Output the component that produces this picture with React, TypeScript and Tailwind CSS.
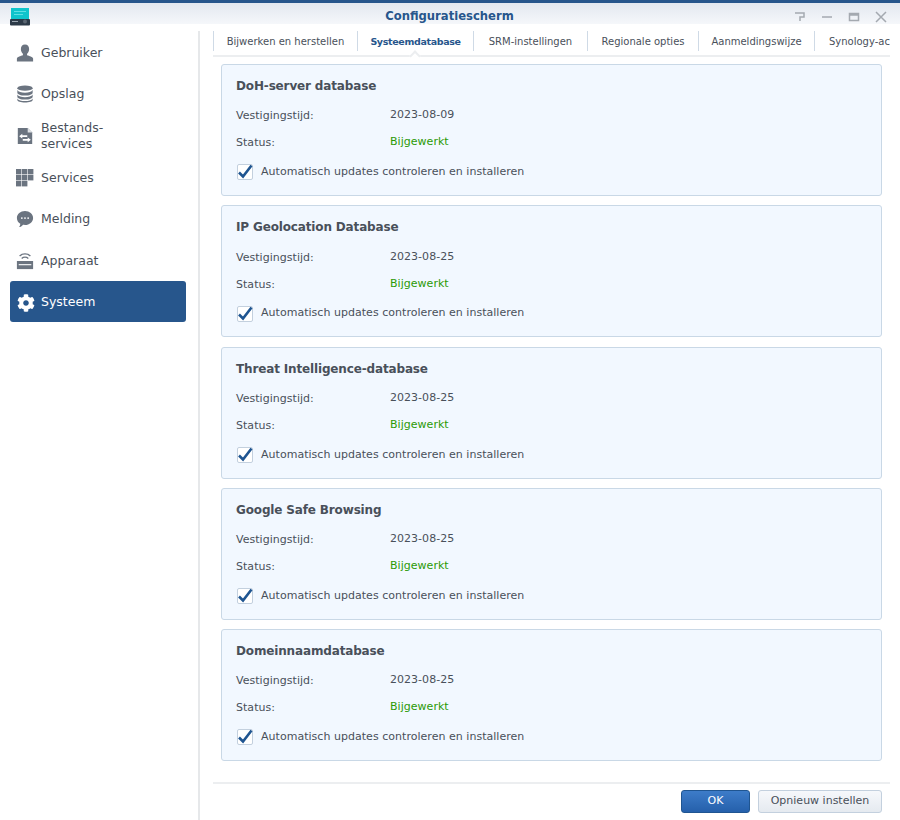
import { FaCog } from "react-icons/fa";

const font = "font-['DejaVu_Sans',Verdana,sans-serif]";

const UserIcon = () => (
  <svg viewBox="0 0 20 20" className="h-5 w-5" fill="#6b7480">
    <path d="M10 0.500c3 0 4.600 2.200 4.600 5 0 2.200-1 4.400-2.300 5.400v1.600c2.600.9 6.300 1.700 6.700 3.600v3.400H1v-3.400c.4-1.900 4.100-2.700 6.700-3.600v-1.600C6.400 9.900 5.400 7.700 5.400 5.500c0-2.800 1.600-5 4.600-5z" />
  </svg>
);

const DbIcon = () => (
  <svg viewBox="0 0 20 20" className="h-5 w-5" fill="#6b7480">
    <ellipse cx="10" cy="3.500" rx="8.500" ry="3" />
    <path d="M1.500 5.500c1 2 4.500 3 8.500 3s7.500-1 8.500-3v3c0 1.800-3.800 3.200-8.500 3.200S1.500 10.300 1.500 8.500z" />
    <path d="M1.500 10.500c1 2 4.500 3 8.500 3s7.500-1 8.500-3v2.500c0 1.800-3.800 3.200-8.500 3.200s-8.500-1.400-8.500-3.200z" />
    <path d="M1.500 15c1 2 4.500 2.800 8.500 2.800s7.500-.8 8.500-2.800v1.700c0 1.600-3.800 2.800-8.500 2.800s-8.500-1.200-8.500-2.800z" />
  </svg>
);

const FileIcon = () => (
  <svg viewBox="0 0 20 20" className="h-5 w-5">
    <path d="M2 1h11l5 5v13H2z" fill="#6b7480" />
    <path d="M13 1l5 5h-5z" fill="#dfe2e6" />
    <path d="M3.500 10.200l3.500-2.700v1.800h5.500v1.800H7v1.800zM16.500 14.300L13 11.600v1.800H7.500v1.800H13V17z" fill="#fff" />
  </svg>
);

const GridIcon = () => (
  <svg viewBox="0 0 18 18" className="h-[18px] w-[18px]" fill="#6b7480">
    <rect x="0" y="0" width="5.400" height="5.400" />
    <rect x="6" y="0" width="5.400" height="5.400" />
    <rect x="12" y="0" width="5.400" height="5.400" />
    <rect x="0" y="6" width="5.400" height="5.400" />
    <rect x="6" y="6" width="5.400" height="5.400" />
    <rect x="12" y="6" width="5.400" height="5.400" />
    <rect x="0" y="12" width="5.400" height="5.400" />
    <rect x="6" y="12" width="5.400" height="5.400" />
  </svg>
);

const ChatIcon = () => (
  <svg viewBox="0 0 20 20" className="h-5 w-5">
    <path d="M10 1c5 0 9 3.400 9 7.800s-4 7.800-9 7.800c-.8 0-1.500-.1-2.200-.2C6.500 18 5 19 3.500 19c.8-1 1.300-2.200 1.300-3.600C2.500 14 1 11.600 1 8.800 1 4.400 5 1 10 1z" fill="#6b7480" />
    <circle cx="6.500" cy="9" r="1" fill="#fff" />
    <circle cx="10" cy="9" r="1" fill="#fff" />
    <circle cx="13.500" cy="9" r="1" fill="#fff" />
  </svg>
);

const RouterIcon = () => (
  <svg viewBox="0 0 20 20" className="h-5 w-5" fill="none">
    <path d="M4 4.500C7.200 1.300 12.800 1.300 16 4.500" stroke="#6b7480" strokeWidth="1.400" />
    <path d="M6.300 7.200c2.100-1.900 5.300-1.900 7.400 0" stroke="#6b7480" strokeWidth="1.400" />
    <path d="M1 10h18v9H1z" fill="#6b7480" />
    <rect x="3" y="13.500" width="14" height="1.200" fill="#fff" />
  </svg>
);

const AppIcon = () => (
  <svg viewBox="0 0 20 18" className="h-[18px] w-5 shrink-0">
    <rect x="1" y="0" width="18" height="12" fill="#10c4cc" />
    <rect x="4" y="3" width="12" height="1" fill="#5fe0e4" />
    <rect x="4" y="6" width="9" height="1" fill="#5fe0e4" />
    <rect x="0" y="11" width="20" height="6.500" rx="1" fill="#2c3a48" />
    <rect x="2" y="13" width="6" height="1" fill="#9aa5b0" />
    <circle cx="15" cy="13.500" r="2" fill="#5a6672" />
  </svg>
);

const menu = [
  { label: "Gebruiker", icon: <UserIcon />, h: "h-[41px]" },
  { label: "Opslag", icon: <DbIcon />, h: "h-[41px]" },
  { label: "Bestands-\nservices", icon: <FileIcon />, h: "h-[43px]" },
  { label: "Services", icon: <GridIcon />, h: "h-[41px]" },
  { label: "Melding", icon: <ChatIcon />, h: "h-[41px]" },
  { label: "Apparaat", icon: <RouterIcon />, h: "h-[42px] pt-px" },
];

const tabs = [
  { label: "Bijwerken en herstellen", w: "w-[144px]" },
  { label: "Systeemdatabase", w: "w-[116px]", active: true },
  { label: "SRM-instellingen", w: "w-[114px]" },
  { label: "Regionale opties", w: "w-[111px]" },
  { label: "Aanmeldingswijze", w: "w-[116px]" },
];

const dbs = [
  { title: "DoH-server database", date: "2023-08-09" },
  { title: "IP Geolocation Database", date: "2023-08-25" },
  { title: "Threat Intelligence-database", date: "2023-08-25" },
  { title: "Google Safe Browsing", date: "2023-08-25" },
  { title: "Domeinnaamdatabase", date: "2023-08-25" },
];

const DbCard = ({ title, date }: { title: string; date: string }) => (
  <div className="h-[132px] rounded-[3px] border border-[#c9d8e6] bg-[#f2f8ff] pl-[14px] pt-[13px]">
    <h2 className="text-[12px] font-bold leading-[17px] tracking-[-0.15px] text-[#49505a]">{title}</h2>
    <div className="mt-[12px] flex h-[17px] items-center text-[11px] tracking-[0.03px] text-[#49505a]">
      <span className="w-[154px] pt-[2px]">Vestigingstijd:</span>
      <span>{date}</span>
    </div>
    <div className="mt-[10px] flex h-[17px] items-center text-[11px] tracking-[0.03px]">
      <span className="w-[154px] pt-[2px] text-[#49505a]">Status:</span>
      <span className="text-[#2c9a06]">Bijgewerkt</span>
    </div>
    <div className="ml-px mt-[13px] flex items-center gap-[8px] text-[11px] tracking-[0.03px] text-[#49505a]">
      <div className="flex h-[16px] w-[16px] items-center justify-center rounded-[2px] border border-[#c3d0de] bg-white">
        <svg viewBox="0 0 16 14" className="h-[14px] w-[16px] shrink-0 overflow-visible">
          <path d="M2 7.500l4 4L14.500 0.500" fill="none" stroke="#1f5591" strokeWidth="2.600" />
        </svg>
      </div>
      <span>Automatisch updates controleren en installeren</span>
    </div>
  </div>
);

export default function App() {
  return (
    <div className={`${font} flex h-[820px] w-[900px] flex-col overflow-hidden bg-white`}>
      <header className="h-[24px] border-t-[3px] border-[#27568c] bg-gradient-to-b from-[#e3e8f0] to-[#f5f7fa]">
        <div className="flex h-[28px] items-center pl-[10px] pr-[13px]">
          <div className="w-[95px]">
            <AppIcon />
          </div>
          <div className="flex-1 text-center text-[11.600px] font-bold text-[#27568c]">Configuratiescherm</div>
          <div className="flex w-[93px] items-center gap-[15px] text-[#a4a9b0]">
            <svg viewBox="0 0 12 12" className="h-3 w-3" fill="none" stroke="currentColor" strokeWidth="1.500">
              <path d="M1 2h9v4H6v4" />
            </svg>
            <svg viewBox="0 0 12 12" className="h-3 w-3" fill="none" stroke="currentColor" strokeWidth="1.500">
              <path d="M1 6h10" />
            </svg>
            <svg viewBox="0 0 12 12" className="h-3 w-3" fill="none" stroke="currentColor" strokeWidth="1.500">
              <path d="M1.500 2.500h9v7h-9zM1.500 4h9" />
            </svg>
            <svg viewBox="0 0 12 12" className="h-3 w-3" fill="none" stroke="currentColor" strokeWidth="1.500">
              <path d="M1 1l10 10M11 1L1 11" />
            </svg>
          </div>
        </div>
      </header>

      <div className="flex flex-1 pt-[7px]">
        <aside className="w-[200px] shrink-0 border-r-2 border-[#e6e8ea] pl-[10px] pr-[12px] pt-px">
          {menu.map((m) => (
            <div key={m.label} className={`${m.h} flex items-center gap-[7px] pl-[6px] text-[12.500px] leading-[16px] text-[#49505a]`}>
              <div className="flex w-[18px] justify-center">{m.icon}</div>
              <span className="whitespace-pre-line">{m.label}</span>
            </div>
          ))}
          <div className="flex h-[41px] items-center gap-[6px] rounded-[3px] bg-[#27568c] pl-[7px] pt-[2px] text-[12.500px] text-white">
            <FaCog size={18} />
            <span>Systeem</span>
          </div>
        </aside>

        <main className="flex min-w-0 flex-1 flex-col pl-[13px] pr-[10px]">
          <nav className="relative h-[26px] border-b-2 border-[#eceef0]">
            <div className="flex h-[20px] overflow-hidden">
              {tabs.map((t) => (
                <div
                  key={t.label}
                  className={`${t.w} shrink-0 border-l border-[#cfdae6] pt-px text-center leading-[20px] ${t.active ? "text-[9.500px] font-bold tracking-[-0.35px] text-[#27568c]" : "text-[10px] text-[#49505a]"}`}
                >
                  {t.label}
                </div>
              ))}
              <div className="shrink-0 border-l border-[#cfdae6] pl-[14px] pt-px text-[10px] leading-[20px] text-[#49505a]">
                Synology-ac
              </div>
            </div>
            <div className="absolute left-[198px] top-[21px] h-[8px] w-[8px] rotate-45 border-l-2 border-t-2 border-[#eceef0] bg-white" />
          </nav>

          <div className="mt-[7px] flex flex-col gap-[9.250px] px-[8px]">
            {dbs.map((d) => (
              <DbCard key={d.title} title={d.title} date={d.date} />
            ))}
          </div>

          <footer className="mt-[21px] flex justify-end gap-[8px] border-t-2 border-[#eceef0] pr-[8px] pt-[6px]">
            <button className="h-[23px] w-[69px] rounded-[3px] border border-[#1f5591] bg-gradient-to-b from-[#3d7cc9] to-[#2560ab] text-[11px] text-white">
              OK
            </button>
            <button className="h-[23px] w-[124px] rounded-[3px] border border-[#c3d0de] bg-gradient-to-b from-[#f6f8fb] to-[#e5eaf0] text-[11px] text-[#49505a]">
              Opnieuw instellen
            </button>
          </footer>
        </main>
      </div>
    </div>
  );
}
